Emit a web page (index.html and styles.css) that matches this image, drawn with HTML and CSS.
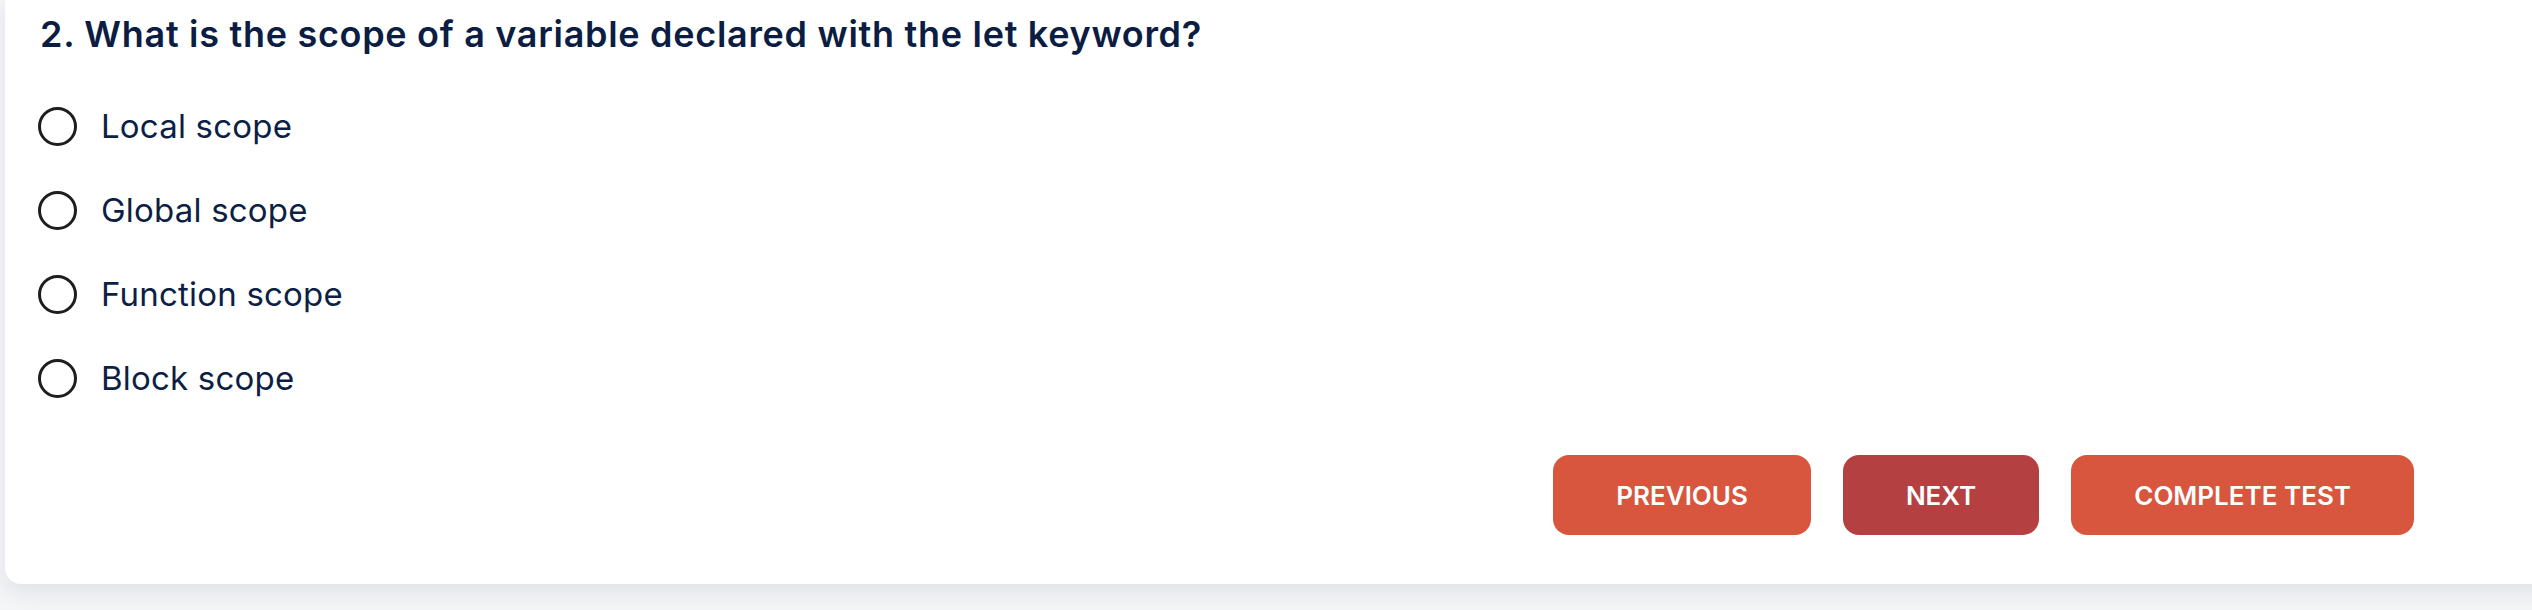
FILE: index.html
```html
<!DOCTYPE html>
<html lang="en">
<head>
<meta charset="utf-8">
<title>Quiz question</title>
<link rel="stylesheet" href="styles.css">
</head>
<body>
<main class="page">
  <section class="card">
    <h2 class="question">2. What is the scope of a variable declared with the let keyword?</h2>
    <ul class="options">
      <li class="option"><span class="radio"></span><span class="label">Local scope</span></li>
      <li class="option"><span class="radio"></span><span class="label">Global scope</span></li>
      <li class="option"><span class="radio"></span><span class="label">Function scope</span></li>
      <li class="option"><span class="radio"></span><span class="label">Block scope</span></li>
    </ul>
    <div class="actions">
      <button class="btn btn-primary">PREVIOUS</button>
      <button class="btn btn-dark">NEXT</button>
      <button class="btn btn-primary">COMPLETE TEST</button>
    </div>
  </section>
</main>
</body>
</html>
```
FILE: styles.css
```css
html, body {
  margin: 0;
  padding: 0;
}
body {
  background: #f4f5f7;
  font-family: "Inter", "Noto Sans", sans-serif;
  overflow: hidden;
  height: 610px;
}
.page {
  padding-left: 5px;
}
.card {
  background: #ffffff;
  margin-right: -40px;
  border-radius: 0 0 16px 16px;
  box-shadow: 0 8px 22px rgba(30, 35, 60, 0.09);
  padding: 12px 158px 49px 33px;
}
.question {
  margin: 0 0 50px 2px;
  font-size: 36px;
  line-height: 44px;
  letter-spacing: 0.7px;
  font-weight: 600;
  color: #0b1d42;
}
.options {
  list-style: none;
  margin: 0;
  padding: 0;
  display: flex;
  flex-direction: column;
  gap: 44px;
}
.option {
  display: flex;
  align-items: center;
  gap: 24px;
  height: 40px;
}
.radio {
  box-sizing: border-box;
  width: 39px;
  height: 39px;
  border: 3.5px solid #1e1e1e;
  border-radius: 50%;
  flex: none;
}
.label {
  font-size: 33px;
  letter-spacing: 0.2px;
  font-weight: 400;
  color: #0d1f44;
}
.actions {
  margin-top: 57px;
  display: flex;
  justify-content: flex-end;
  gap: 32px;
}
.btn {
  height: 80px;
  padding: 0 63px;
  border: none;
  border-radius: 16px;
  color: #ffffff;
  font-family: "Inter", "Noto Sans", sans-serif;
  font-size: 26px;
  letter-spacing: 0;
  font-weight: 600;
  cursor: pointer;
}
.btn-primary {
  background: #d8553e;
}
.btn-dark {
  background: #b44041;
}
```
